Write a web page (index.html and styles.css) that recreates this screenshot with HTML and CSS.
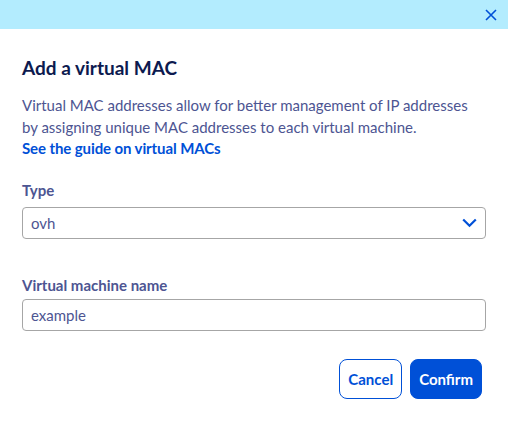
FILE: index.html
```html
<!DOCTYPE html>
<html lang="en">
<head>
    <meta charset="UTF-8">
    <meta name="viewport" content="width=device-width, initial-scale=1.0">
    <title>Add a virtual MAC</title>
    <link rel="stylesheet" href="styles.css">
</head>
<body>
    <div class="modal">
        <div class="modal-header">
            <button class="close" aria-label="Close">
                <svg width="12" height="12" viewBox="0 0 12 12"><path d="M1 1L11 11M11 1L1 11" stroke="#0050d7" stroke-width="1.6" fill="none"/></svg>
            </button>
        </div>
        <div class="modal-body">
            <h2>Add a virtual MAC</h2>
            <p>Virtual MAC addresses allow for better management of IP addresses by assigning unique MAC addresses to each virtual machine.</p>
            <a class="guide" href="#">See the guide on virtual MACs</a>

            <div class="field field-type">
                <label>Type</label>
                <div class="select">
                    <span>ovh</span>
                    <svg width="15" height="10" viewBox="0 0 15 10"><path d="M1.2 1.5L7.5 7.8L13.8 1.5" stroke="#0050d7" stroke-width="2.2" fill="none"/></svg>
                </div>
            </div>

            <div class="field field-name">
                <label>Virtual machine name</label>
                <div class="input">example</div>
            </div>

            <div class="actions">
                <button class="btn btn-outline">Cancel</button>
                <button class="btn btn-primary">Confirm</button>
            </div>
        </div>
    </div>
</body>
</html>
```

FILE: styles.css
```css
body {
    margin: 0;
    font-family: "Source Sans Pro", Lato, "Liberation Sans", sans-serif;
    background-color: #ffffff;
}
.modal {
    width: 508px;
    height: 425px;
}
.modal-header {
    height: 29px;
    background-color: #b3ecfe;
    display: flex;
    justify-content: flex-end;
    align-items: center;
}
.close {
    background: none;
    border: none;
    padding: 0;
    margin-right: 11px;
    margin-top: 1px;
    width: 12px;
    height: 12px;
    display: flex;
}
.modal-body {
    padding: 0 22px;
}
.modal-body h2 {
    margin: 27px 0 0;
    font-size: 19px;
    line-height: 24px;
    color: #0c1a4f;
    font-weight: 700;
}
.modal-body p {
    margin: 14px 0 0;
    font-size: 15px;
    line-height: 22px;
    color: #4d5592;
}
.guide {
    display: block;
    font-size: 15px;
    line-height: 20px;
    font-weight: 700;
    color: #0050d7;
    text-decoration: none;
    letter-spacing: -0.1px;
}
.field label {
    display: block;
    font-size: 15px;
    line-height: 20px;
    font-weight: 700;
    color: #4d5592;
}
.field-type {
    margin-top: 22px;
}
.field-type label {
    margin-bottom: 7px;
}
.field-name {
    margin-top: 36px;
}
.field-name label {
    margin-bottom: 4px;
}
.select, .input {
    height: 30px;
    border: 1px solid #a6a6a6;
    border-radius: 4px;
    display: flex;
    align-items: center;
    justify-content: space-between;
    padding: 0 8px 0 8px;
    font-size: 15px;
    color: #4d5592;
}
.actions {
    display: flex;
    justify-content: flex-end;
    gap: 8px;
    margin-top: 28px;
    padding-right: 4px;
}
.btn {
    height: 40px;
    border-radius: 8px;
    font-family: inherit;
    font-size: 15px;
    font-weight: 700;
    padding: 0 8px;
}
.btn-outline {
    background-color: #ffffff;
    border: 1px solid #0050d7;
    color: #0050d7;
}
.btn-primary {
    background-color: #0050d7;
    border: 1px solid #0050d7;
    color: #ffffff;
}
```
